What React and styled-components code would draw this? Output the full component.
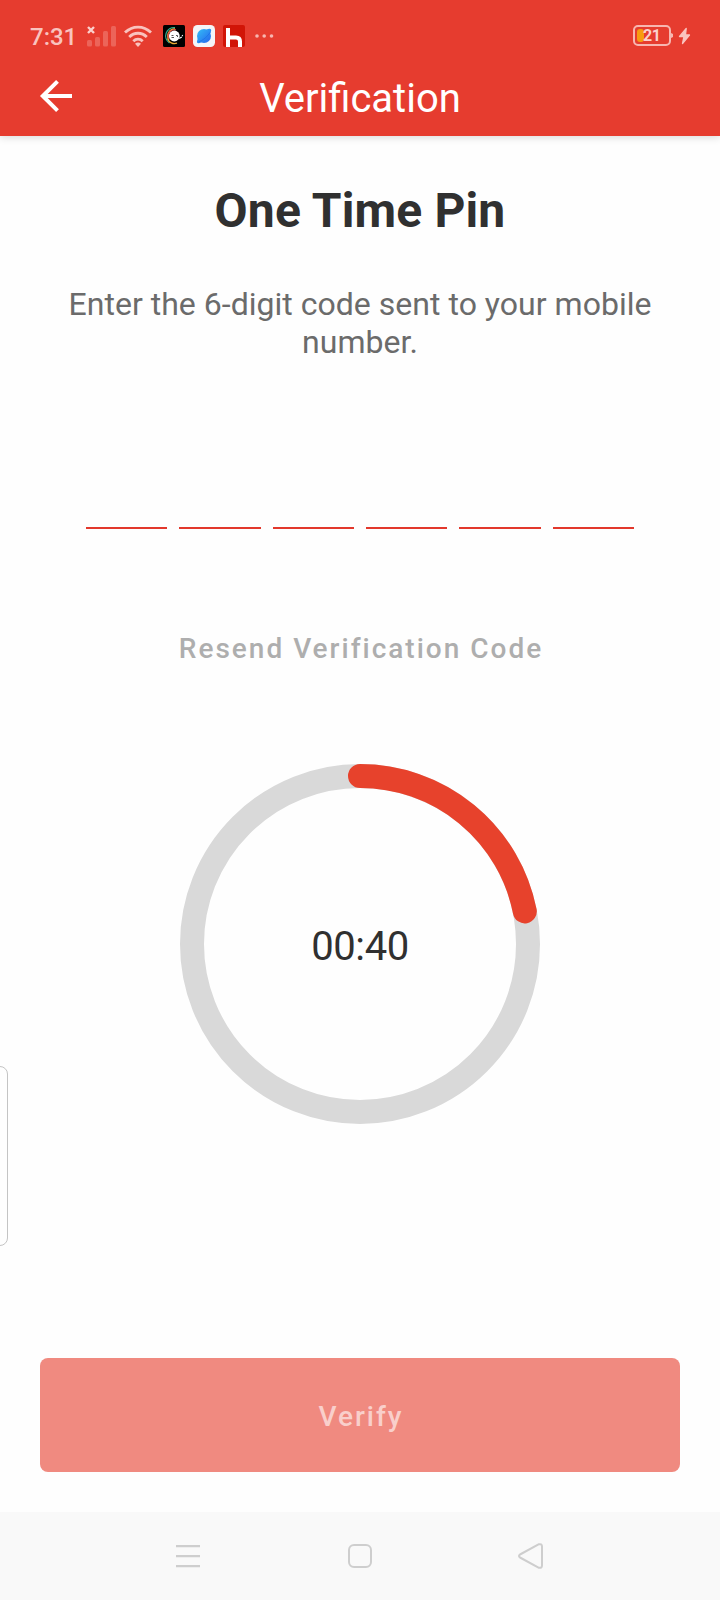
import React from 'react';
import styled, { createGlobalStyle } from 'styled-components';

const GlobalStyle = createGlobalStyle`
  * { box-sizing: border-box; }
  body { margin: 0; background: #fefefe; font-family: Roboto, "Liberation Sans", sans-serif; }
`;

const Screen = styled.div`
  position: relative;
  display: flex;
  flex-direction: column;
  width: 720px;
  height: 1600px;
  background: #fefefe;
  overflow: hidden;
`;

const Header = styled.header`
  height: 136px;
  flex: none;
  background: #e63c2f;
  box-shadow: 0 1px 8px rgba(0, 0, 0, 0.16);
`;

const StatusBar = styled.div`
  display: flex;
  align-items: center;
  height: 72px;
  padding: 0 28px 0 30px;
`;

const Clock = styled.span`
  width: 56px;
  padding-top: 1px;
  font-size: 24px;
  line-height: 28px;
  font-weight: 500;
  letter-spacing: 0;
  color: #f9c3be;
`;

const Glyph = styled.svg`
  display: block;
  flex: none;
  margin-left: ${(p) => p.$gap || 0}px;
  overflow: visible;
`;

const Battery = styled.div`
  display: flex;
  align-items: center;
  margin-left: auto;
`;

const Cell = styled.div`
  display: flex;
  align-items: center;
  width: 38px;
  height: 21px;
  padding-left: 2px;
  margin-top: -1px;
  border: 2px solid #f7b6b0;
  border-radius: 5px;
`;

const Charge = styled.span`
  width: 7px;
  height: 13px;
  border-radius: 3px;
  background: #f79b10;
`;

const Percent = styled.span`
  margin-left: -1px;
  font-size: 16px;
  line-height: 17px;
  font-weight: 700;
  letter-spacing: -0.5px;
  color: #fbd0cc;
`;

const AppBar = styled.div`
  display: grid;
  grid-template-columns: 80px 1fr 80px;
  align-items: center;
  height: 52px;
`;

const BackButton = styled.button`
  display: flex;
  padding: 0 0 4px 40px;
  border: 0;
  background: none;
`;

const Title = styled.h1`
  margin: 0;
  font-size: 40px;
  line-height: 48px;
  padding-top: 2px;
  font-weight: 400;
  text-align: center;
  color: #fff;
`;

const Main = styled.main`
  display: flex;
  flex-direction: column;
  align-items: center;
  flex: 1;
  padding: 47px 40px 40px;
`;

const Heading = styled.h2`
  margin: 0;
  font-size: 48px;
  line-height: 56px;
  font-weight: 700;
  letter-spacing: 0.15px;
  color: #303030;
`;

const Hint = styled.p`
  width: 620px;
  margin: 46px 0 0;
  font-size: 32px;
  line-height: 38px;
  text-align: center;
  letter-spacing: 0.02px;
  color: #6b6b6b;
`;

const PinRow = styled.div`
  display: grid;
  grid-template-columns: repeat(6, 1fr);
  gap: 12px;
  width: 548px;
  height: 80px;
  margin-top: 88px;
`;

const PinSlot = styled.span`
  border-bottom: 2px solid #e2382c;
`;

const Resend = styled.button`
  margin-top: 104px;
  padding: 0 0 0 2px;
  border: 0;
  background: none;
  font-family: inherit;
  font-size: 28px;
  line-height: 32px;
  font-weight: 500;
  letter-spacing: 2px;
  color: #aeaeae;
`;

const Timer = styled.div`
  display: grid;
  place-items: center;
  width: 360px;
  height: 360px;
  margin-top: 99px;
  > * { grid-area: 1 / 1; }
`;

const TimeLeft = styled.span`
  font-size: 40px;
  line-height: 48px;
  padding-top: 5px;
  letter-spacing: -0.4px;
  color: #303030;
`;

const Verify = styled.button`
  width: 640px;
  height: 114px;
  margin-top: auto;
  padding: 3px 0 0 2px;
  border: 0;
  border-radius: 8px;
  background: #f08a80;
  font-family: inherit;
  font-size: 28px;
  font-weight: 500;
  letter-spacing: 2px;
  color: #f9cfcb;
`;

const NavBar = styled.nav`
  display: grid;
  grid-template-columns: 1fr 24px 1fr;
  align-items: center;
  height: 88px;
  padding: 0 176px;
  background: #f9f9f9;
  > :last-child { justify-self: end; }
`;

const EdgeHandle = styled.div`
  position: absolute;
  left: -10px;
  top: 1066px;
  width: 18px;
  height: 180px;
  border: 1px solid #c4c4c4;
  border-radius: 8px;
  background: #fefefe;
`;

const Signal = () => (
  <Glyph width="30" height="22" viewBox="0 0 30 22">
    <g fill="#ec6459">
      <rect x="1" y="15" width="5" height="6.500" rx="1.500" />
      <rect x="9" y="12" width="5" height="9.500" rx="1.500" />
      <rect x="17" y="6" width="5" height="15.500" rx="1.500" />
      <rect x="25" y="1" width="5" height="20.500" rx="1.500" />
    </g>
    <path d="M2 2l6 6M8 2l-6 6" stroke="#fbd0cc" strokeWidth="2.400" />
  </Glyph>
);

const Wifi = () => (
  <Glyph $gap={8} width="28" height="22" viewBox="0 0 28 22">
    <g fill="none" stroke="#f9c3be" strokeWidth="2.800">
      <path d="M1 7.600C8.500 0.200 19.500 0.200 27 7.600" />
      <path d="M5.200 12C10.300 7 17.700 7 22.800 12" />
      <path d="M9.300 16.200C12 13.500 16 13.500 18.700 16.200" />
    </g>
    <path d="M11 18.800q3-2.400 6 0l-3 3.200z" fill="#f9c3be" />
  </Glyph>
);

const FaceApp = () => (
  <Glyph $gap={11} width="22" height="22" viewBox="0 0 22 22">
    <rect width="22" height="22" rx="1.500" fill="#000" />
    <g fill="none" strokeWidth="1.300">
      <path d="M12 2.600A8.400 8.400 0 0 0 6.500 18" stroke="#2fae91" />
      <path d="M12 3.800A7.200 7.200 0 0 0 6 15" stroke="#edc63c" />
      <path d="M4.500 13.500A7.500 7.500 0 0 0 14 18.200" stroke="#edab35" />
      <path d="M13 4.900A6.200 6.200 0 0 0 6 14" stroke="#dc4b43" />
    </g>
    <circle cx="11.300" cy="11" r="5.400" fill="#fff" />
    <path d="M16.200 13.500l2.600-1.500M19 11l.8-.8" fill="none" stroke="#fff" strokeWidth="1.100" />
    <path d="M8.500 10.500h2M8.500 12.500h2.500M13 10.500h1.500v1.500" fill="none" stroke="#444" strokeWidth="0.900" />
  </Glyph>
);

const BrowserApp = () => (
  <Glyph $gap={8} width="22" height="22" viewBox="0 0 22 22">
    <defs>
      <linearGradient id="planet" x1="0" y1="0" x2="1" y2="1">
        <stop offset="0" stopColor="#35bdf7" />
        <stop offset="1" stopColor="#2464ec" />
      </linearGradient>
    </defs>
    <rect width="22" height="22" rx="4.500" fill="#f4f5f8" />
    <circle cx="11" cy="11" r="7" fill="url(#planet)" />
    <path d="M13.500 4.400C16.500 3.400 18.900 3.400 18 6.500L16.500 9zM5 13L4 16C3.500 19 6 18.400 8.500 17.300z" fill="url(#planet)" />
    <path d="M5.500 17C10 15.500 14.500 11.500 17.500 7" fill="none" stroke="#1b70e9" strokeWidth="0.800" />
  </Glyph>
);

const HotelApp = () => (
  <Glyph $gap={8} width="22" height="22" viewBox="0 0 22 22">
    <rect width="22" height="22" rx="2" fill="#d11507" />
    <path d="M5 3v19M5 12.500h8q4 0 4 4V22" fill="none" stroke="#fff" strokeWidth="4" />
  </Glyph>
);

export default function App() {
  return (
    <>
      <GlobalStyle />
      <Screen>
        <Header>
          <StatusBar>
            <Clock>7:31</Clock>
            <Signal />
            <Wifi />
            <FaceApp />
            <BrowserApp />
            <HotelApp />
            <Glyph $gap={10} width="19" height="4" viewBox="0 0 19 4">
              <g fill="#f7b6b0">
                <circle cx="2" cy="2" r="1.800" />
                <circle cx="9.200" cy="2" r="1.800" />
                <circle cx="16.500" cy="2" r="1.800" />
              </g>
            </Glyph>
            <Battery>
              <Cell>
                <Charge />
                <Percent>21</Percent>
              </Cell>
              <Glyph width="3" height="6" viewBox="0 0 3 6">
                <path d="M0 0l2 1v3l-2 1z" fill="#f7b6b0" />
              </Glyph>
              <Glyph $gap={4} width="14" height="16" viewBox="0 0 14 16">
                <path d="M8.200 0.500L1.500 8.500H6L4.500 15.500L11.500 7H7.500z" fill="#fac4bf" stroke="#fac4bf" strokeWidth="1.300" strokeLinejoin="round" />
              </Glyph>
            </Battery>
          </StatusBar>
          <AppBar>
            <BackButton aria-label="Back">
              <Glyph width="32" height="32" viewBox="0 0 32 32">
                <path d="M17.500 1.400L2.800 16l14.700 14.600M2.800 16H32" fill="none" stroke="#fff" strokeWidth="4" />
              </Glyph>
            </BackButton>
            <Title>Verification</Title>
          </AppBar>
        </Header>
        <Main>
          <Heading>One Time Pin</Heading>
          <Hint>Enter the 6-digit code sent to your mobile number.</Hint>
          <PinRow>
            {[0, 1, 2, 3, 4, 5].map((i) => <PinSlot key={i} />)}
          </PinRow>
          <Resend>Resend Verification Code</Resend>
          <Timer>
            <Glyph width="360" height="360" viewBox="0 0 360 360">
              <circle cx="180" cy="180" r="168" fill="none" stroke="#d9d9d9" strokeWidth="24" />
              <path d="M180 12A168 168 0 0 1 344.800 147.400" fill="none" stroke="#e7422c" strokeWidth="24" strokeLinecap="round" />
            </Glyph>
            <TimeLeft>00:40</TimeLeft>
          </Timer>
          <Verify>Verify</Verify>
        </Main>
        <NavBar>
          <Glyph width="24" height="24" viewBox="0 0 24 24">
            <path d="M0 2.200h24M0 12.200h24M0 22.200h24" stroke="#cecece" strokeWidth="2.200" />
          </Glyph>
          <Glyph width="24" height="24" viewBox="0 0 24 24">
            <rect x="1" y="1" width="22" height="22" rx="5" fill="none" stroke="#cecece" strokeWidth="2" />
          </Glyph>
          <Glyph width="26" height="26" viewBox="0 0 26 26">
            <path d="M2 11.500L20.500 1.300Q24 0.500 24 3.500V22.500Q24 25.500 20.500 24.700L2 14.500Q0 13 2 11.500Z" fill="none" stroke="#cecece" strokeWidth="2" strokeLinejoin="round" />
          </Glyph>
        </NavBar>
        <EdgeHandle />
      </Screen>
    </>
  );
}
